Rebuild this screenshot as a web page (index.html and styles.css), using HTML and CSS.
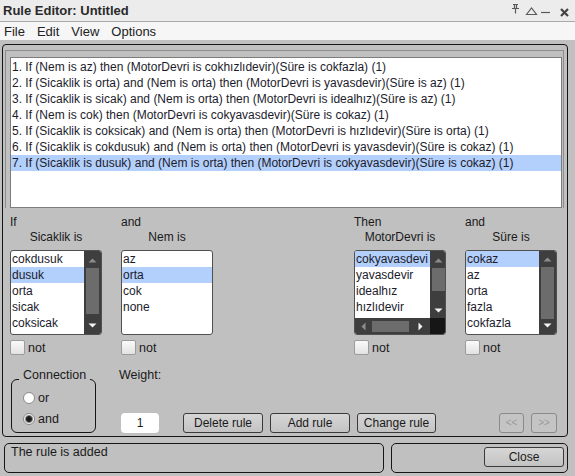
FILE: index.html
```html
<!DOCTYPE html>
<html>
<head>
<meta charset="utf-8">
<title>Rule Editor</title>
<link rel="stylesheet" href="styles.css">
</head>
<body>
<div class="app">
  <div class="titlebar">
    <span class="title">Rule Editor: Untitled</span>
    <svg class="wicons" width="62" height="21" viewBox="510 0 62 21">
      <g fill="none" stroke="#5a5a5a" stroke-width="1.2">
        <path d="M513 4.5h5M512 8.5h7M514.5 4.5v4M516.5 4.5v4M515.5 8.5v5"/>
        <path d="M526.5 14.5l5-6.5 5 6.5z"/>
        <path d="M541 12.5h9"/>
      </g>
      <path d="M561 9l7 7M568 9l-7 7" stroke="#444" stroke-width="2.2" fill="none"/>
    </svg>
  </div>
  <div class="menubar">
    <span>File</span><span>Edit</span><span>View</span><span>Options</span>
  </div>
  <div class="body">
    <div class="panel">
      <div class="rules-frame">
        <div class="rules">
          <div class="rule">1. If (Nem is az) then (MotorDevri is cokhızlıdevir)(Süre is cokfazla) (1)</div>
          <div class="rule">2. If (Sicaklik is orta) and (Nem is orta) then (MotorDevri is yavasdevir)(Süre is az) (1)</div>
          <div class="rule">3. If (Sicaklik is sicak) and (Nem is orta) then (MotorDevri is idealhız)(Süre is az) (1)</div>
          <div class="rule">4. If (Nem is cok) then (MotorDevri is cokyavasdevir)(Süre is cokaz) (1)</div>
          <div class="rule">5. If (Sicaklik is coksicak) and (Nem is orta) then (MotorDevri is hızlıdevir)(Süre is orta) (1)</div>
          <div class="rule">6. If (Sicaklik is cokdusuk) and (Nem is orta) then (MotorDevri is yavasdevir)(Süre is cokaz) (1)</div>
          <div class="rule sel">7. If (Sicaklik is dusuk) and (Nem is orta) then (MotorDevri is cokyavasdevir)(Süre is cokaz) (1)</div>
        </div>
      </div>

      <div class="vars">
        <div class="col">
          <div class="l1">If</div>
          <div class="l2">Sicaklik is</div>
          <div class="lb">
            <div class="items">
              <div class="it">cokdusuk</div>
              <div class="it sel">dusuk</div>
              <div class="it">orta</div>
              <div class="it">sicak</div>
              <div class="it">coksicak</div>
            </div>
            <div class="vs">
              <div class="up"><svg width="9" height="5"><path d="M0.5 4.5L4.5 0.5 8.5 4.5z" fill="#8c8c8c"/></svg></div>
              <div class="track"><div class="thumb tall"></div></div>
              <div class="down"><svg width="9" height="5"><path d="M0.5 0.5L4.5 4.5 8.5 0.5z" fill="#f4f4f4"/></svg></div>
            </div>
          </div>
          <div class="chk"><span class="box"></span>not</div>
        </div>

        <div class="col">
          <div class="l1">and</div>
          <div class="l2">Nem is</div>
          <div class="lb">
            <div class="items">
              <div class="it">az</div>
              <div class="it sel">orta</div>
              <div class="it">cok</div>
              <div class="it">none</div>
            </div>
          </div>
          <div class="chk"><span class="box"></span>not</div>
        </div>

        <div class="col col3">
          <div class="l1">Then</div>
          <div class="l2">MotorDevri is</div>
          <div class="lb grid">
            <div class="items">
              <div class="it sel">cokyavasdevi</div>
              <div class="it">yavasdevir</div>
              <div class="it">idealhız</div>
              <div class="it">hızlıdevir</div>
            </div>
            <div class="vs">
              <div class="up"><svg width="9" height="5"><path d="M0.5 4.5L4.5 0.5 8.5 4.5z" fill="#8c8c8c"/></svg></div>
              <div class="track"><div class="thumb short"></div></div>
              <div class="down short-down"><svg width="9" height="5"><path d="M0.5 0.5L4.5 4.5 8.5 0.5z" fill="#f4f4f4"/></svg></div>
            </div>
            <div class="hs">
              <div class="left"><svg width="5" height="9"><path d="M4.5 0.5L0.5 4.5 4.5 8.5z" fill="#8c8c8c"/></svg></div>
              <div class="htrack"><div class="hthumb"></div></div>
              <div class="right"><svg width="5" height="9"><path d="M0.5 0.5L4.5 4.5 0.5 8.5z" fill="#f4f4f4"/></svg></div>
            </div>
            <div class="corner"></div>
          </div>
          <div class="chk"><span class="box"></span>not</div>
        </div>

        <div class="col last">
          <div class="l1">and</div>
          <div class="l2">Süre is</div>
          <div class="lb">
            <div class="items">
              <div class="it sel">cokaz</div>
              <div class="it">az</div>
              <div class="it">orta</div>
              <div class="it">fazla</div>
              <div class="it">cokfazla</div>
            </div>
            <div class="vs">
              <div class="up"><svg width="9" height="5"><path d="M0.5 4.5L4.5 0.5 8.5 4.5z" fill="#8c8c8c"/></svg></div>
              <div class="track"><div class="thumb tall2"></div></div>
              <div class="down"><svg width="9" height="5"><path d="M0.5 0.5L4.5 4.5 8.5 0.5z" fill="#f4f4f4"/></svg></div>
            </div>
          </div>
          <div class="chk"><span class="box"></span>not</div>
        </div>
      </div>

      <div class="bottom">
        <fieldset class="conn">
          <legend>Connection</legend>
          <div class="radio"><span class="rb"></span>or</div>
          <div class="radio"><span class="rb on"></span>and</div>
        </fieldset>
        <div class="weight">
          <div class="wl">Weight:</div>
          <div class="win">1</div>
        </div>
        <div class="btns">
          <div class="btn">Delete rule</div>
          <div class="btn">Add rule</div>
          <div class="btn w79">Change rule</div>
        </div>
        <div class="nav">
          <div class="nbtn">&lt;&lt;</div>
          <div class="nbtn w26">&gt;&gt;</div>
        </div>
      </div>
    </div>

    <div class="status">
      <div class="msg">The rule is added</div>
      <div class="closebox"><div class="btn">Close</div></div>
    </div>
  </div>
</div>
</body>
</html>
```
FILE: styles.css
```css
* { box-sizing: border-box; margin: 0; padding: 0; }
body {
  margin: 0;
  width: 575px;
  height: 476px;
  overflow: hidden;
  font-family: "Liberation Sans", Arial, sans-serif;
  font-size: 12px;
  color: #1a1a1a;
  background: #c0c0c0;
}
.app {
  width: 575px;
  height: 476px;
  display: flex;
  flex-direction: column;
  background: #c0c0c0;
}
.titlebar {
  height: 22px;
  background: #ececec;
  border-bottom: 1px solid #a9a9a9;
  display: flex;
  align-items: center;
  justify-content: space-between;
  padding-left: 3px;
  padding-right: 3px;
}
.title { font-weight: bold; font-size: 13px; color: #2a2a2a; }
.wicons { display: block; }
.menubar {
  height: 18px;
  background: #f6f6f6;
  display: flex;
  align-items: center;
  gap: 12px;
  padding-left: 4px;
  font-size: 13px;
  color: #222;
}
.body {
  flex: 1;
  display: flex;
  flex-direction: column;
  padding-top: 4px;
}
.panel {
  margin-left: 2px;
  width: 566px;
  height: 393px;
  border: 1px solid #151515;
  border-radius: 4px;
  display: flex;
  flex-direction: column;
}
.rules-frame {
  margin: 5px 3px 0 2px;
  border: 1px solid #8e8e8e;
  border-bottom: none;
  padding: 6px 1px 0 4px;
}
.rules {
  height: 151px;
  background: #fff;
  border: 1px solid #7c7c7c;
  padding-top: 1px;
}
.rule {
  height: 16px;
  line-height: 16px;
  padding-left: 1px;
  white-space: nowrap;
  color: #1c1c2c;
}
.sel { background: #b3cffb; }

.vars {
  display: flex;
  padding-left: 7px;
  margin-top: 7px;
}
.col { width: 92px; flex-shrink: 0; margin-right: 19px; }
.col.last { margin-right: 0; }
.col3 { margin-left: 122px; }
.l1, .l2 { line-height: 15px; height: 15px; white-space: nowrap; }
.l2 { text-align: center; }
.lb {
  margin-top: 5px;
  height: 85px;
  background: #fff;
  border: 1px solid #505050;
  border-radius: 3px;
  overflow: hidden;
  display: flex;
}
.items { flex: 1; min-width: 0; overflow: hidden; }
.it {
  height: 16px;
  line-height: 16px;
  padding-left: 1px;
  white-space: nowrap;
  overflow: hidden;
  color: #1c1c2c;
}
.vs {
  width: 17px;
  background: #3e3e3e;
  display: flex;
  flex-direction: column;
}
.up { height: 16px; display: flex; justify-content: center; align-items: center; padding-top: 2px; }
.track { flex: 1; padding: 1px 2px 0 2px; }
.thumb { background: #6c6c6c; width: 13px; }
.thumb.tall { height: 46px; }
.thumb.tall2 { height: 52px; }
.thumb.short { height: 23px; }
.down { height: 16px; display: flex; justify-content: center; align-items: center; padding-bottom: 2px; }
.short-down { height: 14px; }

.lb.grid {
  display: grid;
  grid-template-columns: 1fr 17px;
  grid-template-rows: 1fr 16px;
}
.hs {
  background: #3e3e3e;
  display: flex;
  align-items: center;
}
.left { width: 16px; display: flex; justify-content: center; }
.htrack { flex: 1; padding: 0 1px; display: flex; align-items: center; }
.hthumb { width: 37px; height: 11px; background: #6c6c6c; }
.right { width: 20px; display: flex; justify-content: center; }
.corner { background: #161616; }

.chk {
  margin-top: 5px;
  display: flex;
  align-items: center;
  height: 15px;
  gap: 3px;
  font-size: 12.5px;
}
.box {
  width: 15px;
  height: 15px;
  border: 1px solid #9c9c9c;
  border-radius: 2px;
  background: linear-gradient(#fafafa, #e2e2e2);
}

.bottom {
  margin-top: auto;
  margin-bottom: 3px;
  padding-left: 8px;
  display: flex;
  align-items: flex-end;
}
.conn {
  width: 85px;
  flex-shrink: 0;
  border: 1px solid #151515;
  border-radius: 6px;
  padding: 1px 0 6px 11px;
  min-inline-size: 0;
}
.conn legend {
  margin-left: -4px;
  padding: 0 4px 8px 4px;
  line-height: 14px;
  font-size: 12.5px;
}
.radio {
  height: 14px;
  line-height: 14px;
  display: flex;
  align-items: center;
  gap: 3px;
  font-size: 12.5px;
}
.radio + .radio { margin-top: 7px; }
.rb {
  width: 12px;
  height: 12px;
  border-radius: 50%;
  border: 1px solid #8a8a8a;
  background: #fff;
}
.rb.on {
  background: radial-gradient(circle, #111 0, #222 2.5px, #888 3.5px, #f4f4f4 4.5px);
}
.weight { margin-left: 23px; width: 40px; flex-shrink: 0; }
.wl { line-height: 14px; height: 14px; font-size: 12.5px; white-space: nowrap; }
.win {
  margin-top: 31px;
  margin-left: 2px;
  width: 38px;
  height: 20px;
  line-height: 20px;
  background: #fff;
  border-radius: 4px;
  text-align: center;
}
.btns { display: flex; gap: 7px; margin-left: 24px; flex-shrink: 0; }
.btn {
  width: 80px;
  height: 20px;
  line-height: 18px;
  text-align: center;
  border: 1px solid #3a3a3a;
  border-radius: 3px;
  background: linear-gradient(#d6d6d6, #c3c3c3);
  color: #1a1a1a;
  flex-shrink: 0;
}
.btn.w79 { width: 79px; }
.nav { display: flex; gap: 7px; margin-left: 63px; flex-shrink: 0; }
.nbtn {
  width: 25px;
  height: 20px;
  line-height: 18px;
  text-align: center;
  border: 1px solid #8a8a8a;
  border-radius: 3px;
  background: #c4c4c4;
  color: #9a9a9a;
  font-size: 10px;
}
.nbtn.w26 { width: 26px; }

.status {
  margin-top: 6px;
  height: 30px;
  display: flex;
}
.msg {
  margin-left: 4px;
  width: 380px;
  border: 1px solid #151515;
  border-radius: 5px;
  padding: 1px 6px;
  line-height: 14px;
  font-size: 12.5px;
}
.closebox {
  margin-left: 7px;
  width: 177px;
  border: 1px solid #151515;
  border-radius: 5px;
  display: flex;
  justify-content: flex-end;
  align-items: flex-start;
  padding: 3px 3px 0 0;
}
```
